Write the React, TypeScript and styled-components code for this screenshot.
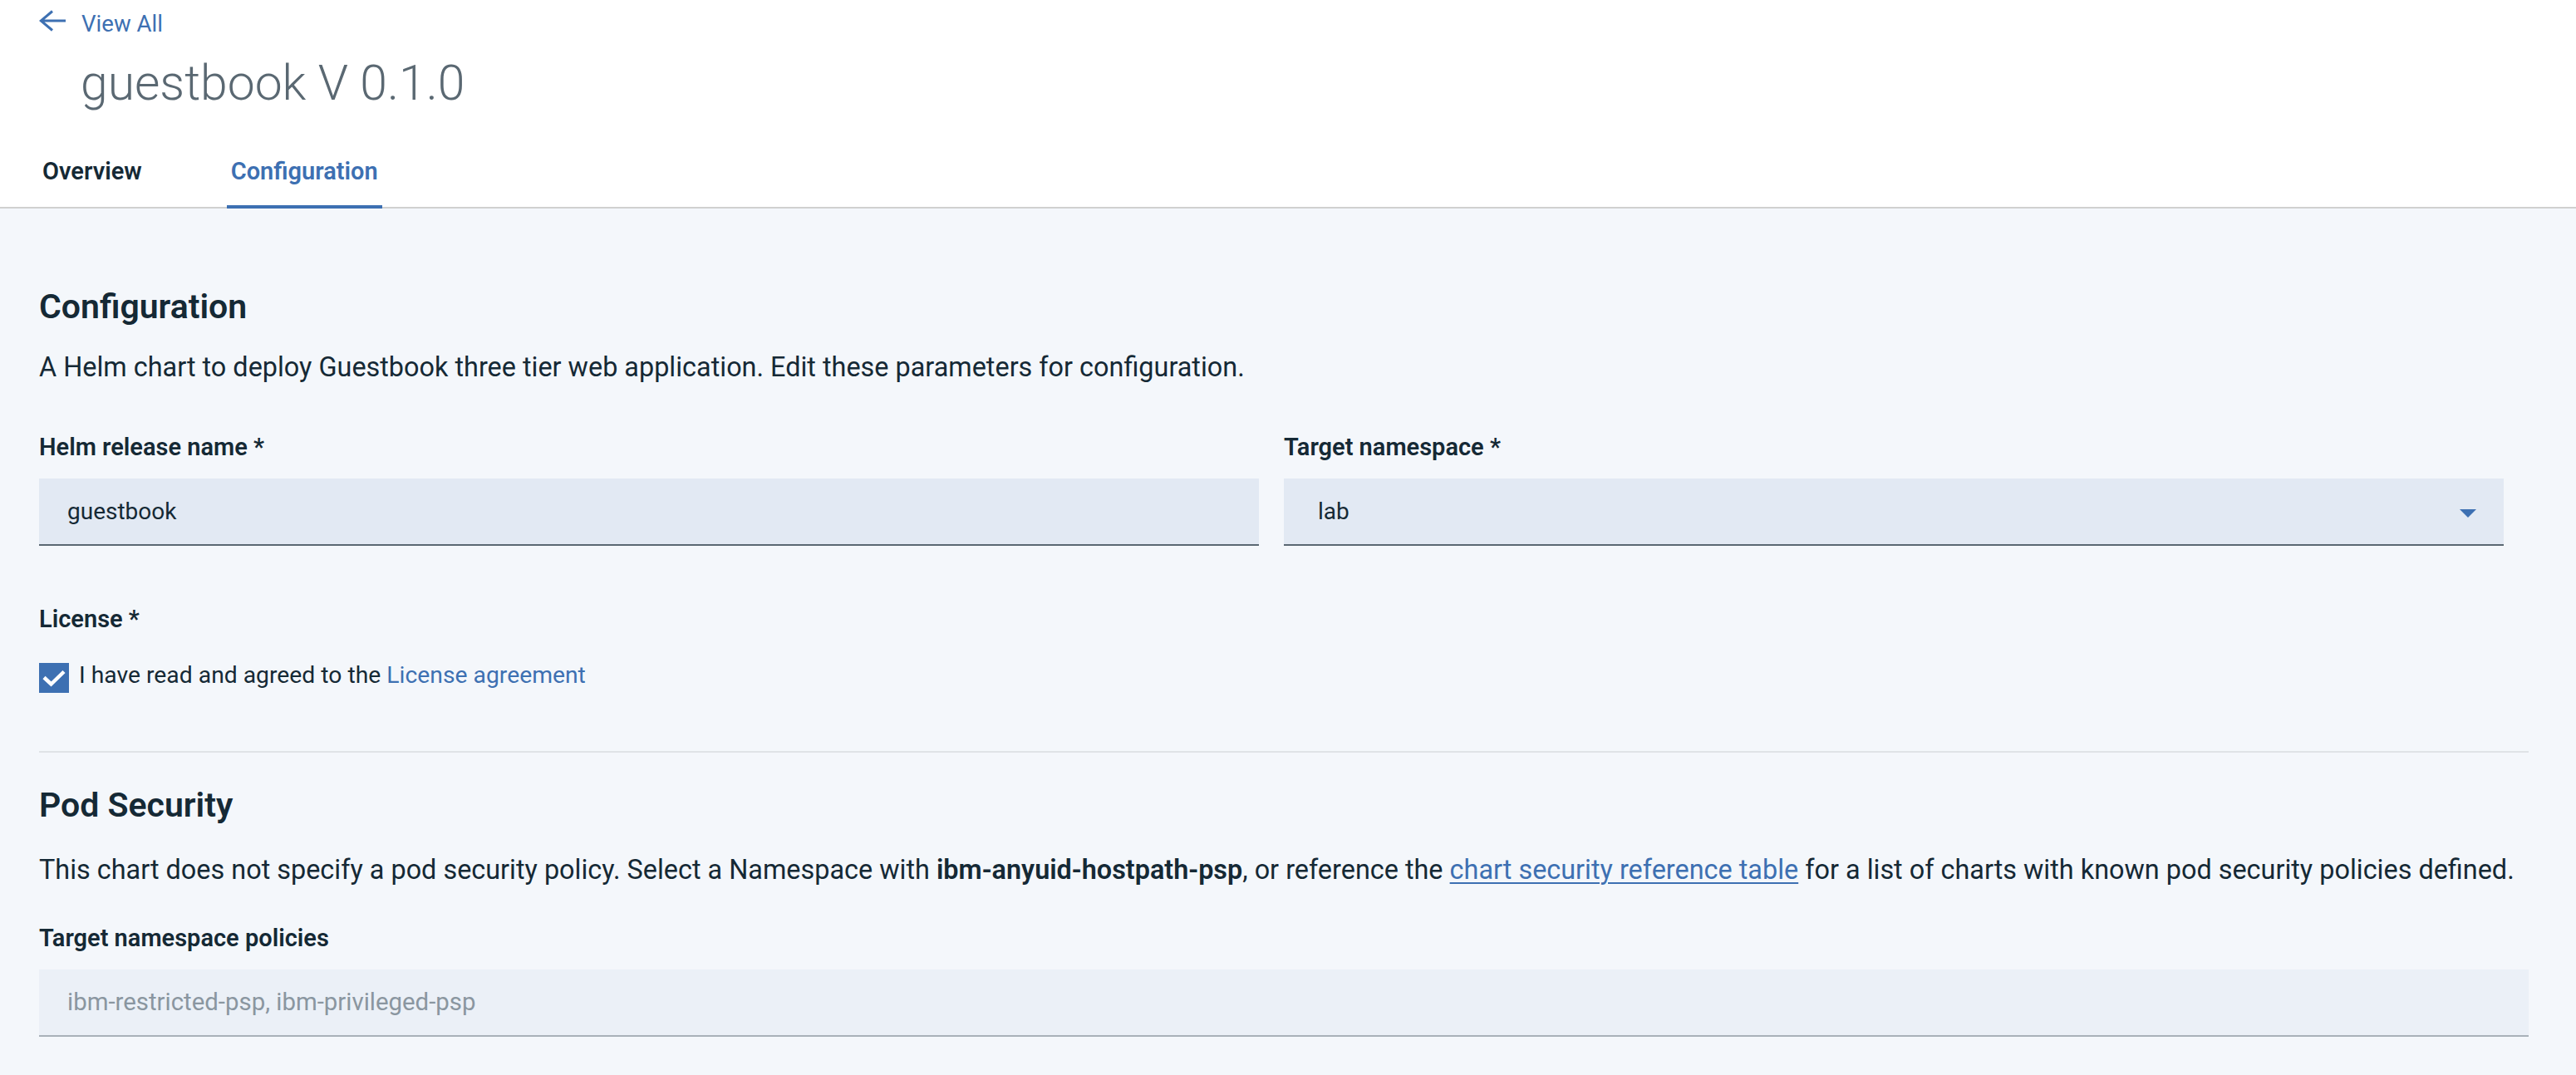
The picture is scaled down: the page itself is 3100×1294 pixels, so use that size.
import React from "react";
import styled, { createGlobalStyle } from "styled-components";

const GlobalStyle = createGlobalStyle`
  html, body {
    margin: 0;
    padding: 0;
    background: #f4f7fb;
  }
  body {
    font-family: Roboto, "Liberation Sans", Arial, sans-serif;
    color: #152935;
  }
  * { box-sizing: border-box; }
`;

const Page = styled.div`
  min-height: 1294px;
  background: #f4f7fb;
`;

const Header = styled.header`
  background: #ffffff;
  border-bottom: 2px solid #d0d0d0;
`;

const BackLink = styled.a`
  display: flex;
  align-items: flex-start;
  padding-left: 47px;
  height: 54px;
  color: #3d70b2;
  text-decoration: none;
  cursor: pointer;
`;

const BackIcon = styled.svg`
  width: 32px;
  height: 26px;
  margin-top: 12px;
  flex: none;
`;

const BackText = styled.span`
  margin-top: 4px;
  margin-left: 19px;
  font-size: 27.6px;
  line-height: 50px;
  font-weight: 400;
`;

const Title = styled.h1`
  margin: 11px 0 0 0;
  padding-left: 97px;
  font-size: 58.8px;
  line-height: 70px;
  font-weight: 300;
  color: #5a6872;
`;

const TabList = styled.nav`
  display: flex;
  gap: 97px;
  padding-left: 46px;
  margin-top: 51px;
  margin-bottom: -2px;
`;

const Tab = styled.a<{ $active?: boolean }>`
  display: block;
  padding: 0 5px 21px;
  font-size: 29px;
  line-height: 40px;
  font-weight: 600;
  color: ${(p) => (p.$active ? "#3d70b2" : "#152935")};
  border-bottom: 4px solid ${(p) => (p.$active ? "#3d70b2" : "transparent")};
  text-decoration: none;
  cursor: pointer;
`;

const Body = styled.main`
  padding: 0 57px 40px 47px;
`;

const SectionTitle = styled.h2<{ $top: number }>`
  margin: ${(p) => p.$top}px 0 0;
  font-size: 41px;
  line-height: 50px;
  font-weight: 600;
  color: #152935;
`;

const Paragraph = styled.p<{ $top: number }>`
  margin: ${(p) => p.$top}px 0 0;
  font-size: 32.4px;
  line-height: 44px;
  font-weight: 400;
  color: #152935;
  white-space: nowrap;

  strong {
    font-weight: 600;
  }
`;

const UnderlinedLink = styled.a`
  color: #3d70b2;
  text-decoration: underline;
  text-decoration-thickness: 2px;
  text-underline-offset: 4px;
  cursor: pointer;
`;

const FormRow = styled.div`
  display: grid;
  grid-template-columns: 1fr 1fr;
  margin-top: 56px;
`;

const FieldGroup = styled.div<{ $top?: number; $full?: boolean }>`
  display: flex;
  flex-direction: column;
  padding-right: ${(p) => (p.$full ? 0 : 30)}px;
  margin-top: ${(p) => p.$top ?? 0}px;
`;

const Label = styled.label`
  font-size: 29px;
  line-height: 36px;
  font-weight: 600;
  color: #152935;
  white-space: nowrap;
`;

const TextInput = styled.div<{ $disabled?: boolean }>`
  display: flex;
  align-items: center;
  justify-content: space-between;
  margin-top: 20px;
  height: 81px;
  padding: 0 33px 0 34px;
  font-size: ${(p) => (p.$disabled ? 29.4 : 28)}px;
  line-height: 79px;
  background: ${(p) => (p.$disabled ? "#ebf0f7" : "#e2e9f3")};
  border-bottom: 2px solid ${(p) => (p.$disabled ? "#a9b1b9" : "#5a6872")};
  color: ${(p) => (p.$disabled ? "#8a96a0" : "#152935")};
`;

const SelectValue = styled.span`
  padding-left: 7px;
`;

const Caret = styled.svg`
  width: 20px;
  height: 10px;
  margin-top: 4px;
`;

const CheckRow = styled.label`
  display: flex;
  align-items: flex-start;
  gap: 12px;
  margin-top: 35px;
  cursor: pointer;
`;

const CheckBox = styled.span`
  display: flex;
  align-items: center;
  justify-content: center;
  width: 36px;
  height: 36px;
  background: #3d70b2;
  flex: none;
`;

const CheckText = styled.span`
  font-size: 28.3px;
  line-height: 30px;
  color: #152935;
`;

const PlainLink = styled.a`
  color: #3d70b2;
  text-decoration: none;
  cursor: pointer;
`;

const Divider = styled.hr`
  margin: 70px 0 0;
  border: 0;
  height: 2px;
  background: #dfe3e6;
`;

export default function App() {
  return (
    <Page>
      <GlobalStyle />
      <Header>
        <BackLink>
          <BackIcon viewBox="0 0 32 26" fill="none" stroke="#3d70b2" strokeWidth={3}>
            <path d="M16 1.5 L2.2 13 L16 24.5 M2.2 13 H32" />
          </BackIcon>
          <BackText>View All</BackText>
        </BackLink>
        <Title>guestbook V 0.1.0</Title>
        <TabList>
          <Tab>Overview</Tab>
          <Tab $active>Configuration</Tab>
        </TabList>
      </Header>
      <Body>
        <SectionTitle $top={93}>Configuration</SectionTitle>
        <Paragraph $top={26}>
          A Helm chart to deploy Guestbook three tier web application. Edit these parameters for
          configuration.
        </Paragraph>
        <FormRow>
          <FieldGroup>
            <Label>Helm release name *</Label>
            <TextInput>guestbook</TextInput>
          </FieldGroup>
          <FieldGroup>
            <Label>Target namespace *</Label>
            <TextInput>
              <SelectValue>lab</SelectValue>
              <Caret viewBox="0 0 20 10">
                <polygon points="0,0 20,0 10,10" fill="#3d70b2" />
              </Caret>
            </TextInput>
          </FieldGroup>
        </FormRow>
        <FieldGroup $top={70} $full>
          <Label>License *</Label>
        </FieldGroup>
        <CheckRow>
          <CheckBox>
            <svg width="36" height="36" viewBox="0 0 36 36" fill="none">
              <path d="M6 17.5 L14.5 25.5 L30 10.5" stroke="#ffffff" strokeWidth={4.5} />
            </svg>
          </CheckBox>
          <CheckText>
            I have read and agreed to the <PlainLink>License agreement</PlainLink>
          </CheckText>
        </CheckRow>
        <Divider />
        <SectionTitle $top={38}>Pod Security</SectionTitle>
        <Paragraph $top={31}>
          This chart does not specify a pod security policy. Select a Namespace with{" "}
          <strong>ibm-anyuid-hostpath-psp</strong>, or reference the{" "}
          <UnderlinedLink>chart security reference table</UnderlinedLink> for a list of charts with
          known pod security policies defined.
        </Paragraph>
        <FieldGroup $top={42} $full>
          <Label>Target namespace policies</Label>
          <TextInput $disabled>ibm-restricted-psp, ibm-privileged-psp</TextInput>
        </FieldGroup>
      </Body>
    </Page>
  );
}
